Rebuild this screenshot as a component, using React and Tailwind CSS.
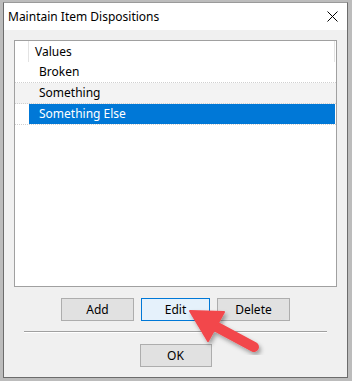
import React from "react";

const font = { fontFamily: '"Noto Sans", "Segoe UI", Arial, sans-serif' };

function Btn({ children, active }) {
  return (
    <div
      className={
        "h-[23px] flex items-center justify-center text-[12px] text-black border " +
        (active ? "border-[#0078d7] bg-[#e5f1fb]" : "border-[#adadad] bg-[#e1e1e1]")
      }
    >
      {children}
    </div>
  );
}

export default function App() {
  return (
    <div className="relative w-[352px] h-[381px] bg-[#bcbcbc] overflow-hidden" style={font}>
      <div className="absolute left-[3px] top-[2px] w-[345px] h-[376px] border border-[#6c6c6c] border-t-[#9a9a9a] bg-[#f0f0f0] flex flex-col">
        {/* title bar */}
        <div className="h-[27px] bg-white flex items-center justify-between pl-[4px] pr-[9px] shrink-0">
          <span className="text-[12px] text-black leading-none">Maintain Item Dispositions</span>
          <svg width="11" height="11" viewBox="0 0 11 11">
            <path d="M0.5 0.5 L10.5 10.5 M10.5 0.5 L0.5 10.5" stroke="#000" strokeWidth="1" fill="none" />
          </svg>
        </div>
        {/* list box */}
        <div className="mt-[10px] mx-[10px] h-[247px] border border-[#a0a0a0] bg-white flex flex-col">
          <div className="h-[21px] flex">
            <div className="w-[14px] border-r border-[#e3e3e3]" />
            <div className="flex-1 flex items-center pl-[6px] text-[12px] text-black border-r border-[#e3e3e3] mr-[1px]">
              Values
            </div>
          </div>
          <div className="h-[21px] flex border-b border-dotted border-[#d0d0d0]">
            <div className="w-[14px]" />
            <div className="flex-1 flex items-center pl-[10px] text-[12px] text-black">Broken</div>
          </div>
          <div className="h-[21px] flex bg-[#f3f3f3] border-b border-dotted border-[#d0d0d0]">
            <div className="w-[14px]" />
            <div className="flex-1 flex items-center pl-[10px] text-[12px] text-black">Something</div>
          </div>
          <div className="h-[21px] flex border-b border-dotted border-[#d0d0d0]">
            <div className="w-[14px]" />
            <div className="flex-1 flex items-center pl-[10px] text-[12px] text-white bg-[#0078d7] mr-[1px]">
              Something Else
            </div>
          </div>
        </div>
        {/* buttons */}
        <div className="mt-[11px] flex justify-center gap-[7px]">
          <div className="w-[73px]"><Btn>Add</Btn></div>
          <div className="w-[69px]"><Btn active>Edit</Btn></div>
          <div className="w-[73px]"><Btn>Delete</Btn></div>
        </div>
        {/* separator */}
        <div className="mt-[10px] mx-[20px] border-t border-[#a0a0a0] border-b border-b-white" />
        <div className="mt-[11px] flex justify-center">
          <div className="w-[72px]"><Btn>OK</Btn></div>
        </div>
      </div>
      {/* annotation arrow */}
      <svg className="absolute left-0 top-0" width="352" height="381" viewBox="0 0 352 381">
        <defs>
          <filter id="sh" x="-20%" y="-20%" width="140%" height="140%">
            <feDropShadow dx="2" dy="3" stdDeviation="2" floodColor="#000" floodOpacity="0.35" />
          </filter>
        </defs>
        <g filter="url(#sh)">
          <line x1="213" y1="325" x2="254" y2="347" stroke="#f2474b" strokeWidth="10" strokeLinecap="round" />
          <path d="M190 311 L224 312 L208 341 Z" fill="#f2474b" stroke="#f2474b" strokeWidth="2" strokeLinejoin="round" />
        </g>
      </svg>
    </div>
  );
}
